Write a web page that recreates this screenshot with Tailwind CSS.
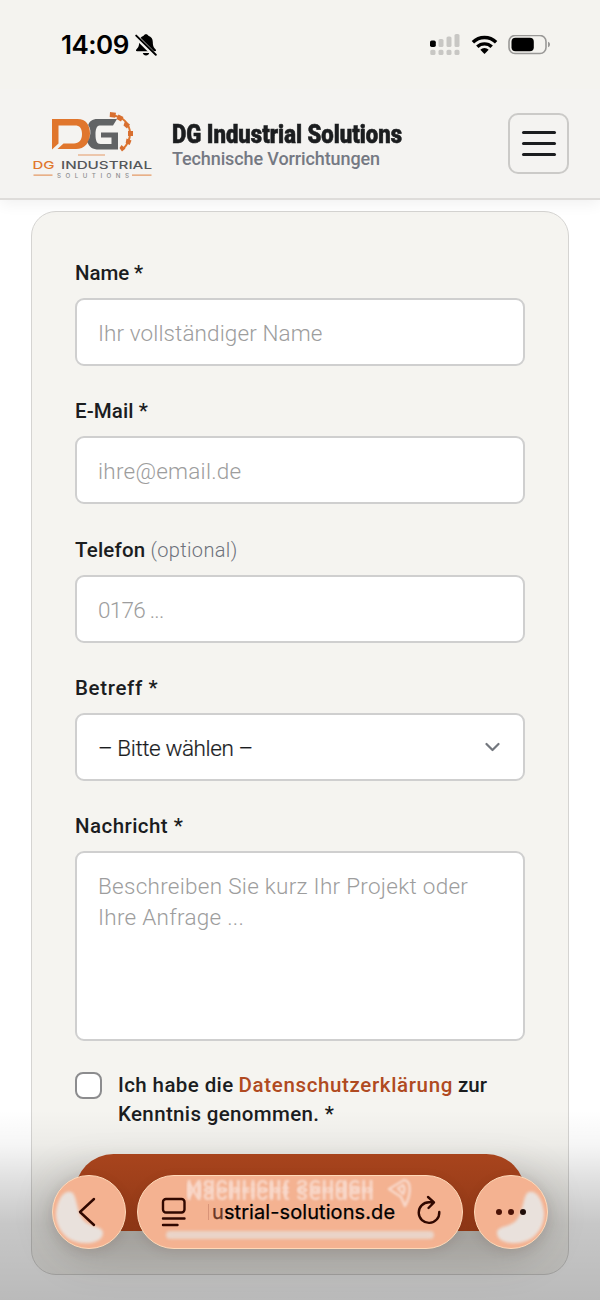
<!DOCTYPE html>
<html lang="de">
<head>
<meta charset="utf-8">
<title>DG Industrial Solutions</title>
<script src="https://cdn.jsdelivr.net/npm/@tailwindcss/browser@4"></script>
</head>
<body class="bg-white">
<div class="relative h-[1300px] w-[600px] overflow-hidden bg-white font-['Roboto',sans-serif] text-[#1b1d1f]">

  <header class="relative z-10 flex h-[200px] flex-col border-b-2 border-[#dedcda] bg-[#f4f3f1] shadow-[0_4px_14px_rgba(0,0,0,0.06)]">
    <!-- status bar -->
    <div class="flex h-[89px] items-center justify-between bg-[#f4f3ef] pt-px pr-[49px] pl-[61px] text-black">
      <div class="flex items-center gap-[6px]">
        <span class="font-['Inter',sans-serif] text-[26px] leading-[30px] font-semibold tracking-[-0.5px]">14:09</span>
        <svg class="h-[24px] w-[22px]" viewBox="0 0 22 24">
          <path d="M11 1.200c-1.200 0-2 .7-2.400 1.600C5.800 3.700 4.200 6 4.200 9c0 4.500-1.200 5.700-2.700 7.300-1 1-.5 2 .6 2h17.800c1.100 0 1.600-1 .6-2-1.500-1.600-2.700-2.800-2.700-7.300 0-3-1.600-5.300-4.400-6.200C13 1.900 12.200 1.200 11 1.200z"/>
          <path d="M7.800 20h6.400c-.3 1.500-1.500 2.500-3.200 2.500S8.100 21.500 7.800 20z"/>
          <path d="M0 2.500 20.500 23" stroke="#f4f3ef" stroke-width="4.600"/>
          <path d="M1.200 2.600 20.800 21.800" stroke="#000" stroke-width="1.900" stroke-linecap="round"/>
        </svg>
      </div>
      <div class="flex items-center">
        <svg class="h-[24px] w-[32px]" viewBox="0 0 32 24">
          <rect x="0" y="7.500" width="5.800" height="6.500" rx="1.700"/>
          <g fill="#c8c7c4">
            <rect x="8.500" y="6" width="5" height="8" rx="1.600"/>
            <rect x="16.500" y="3.500" width="5" height="10.500" rx="1.600"/>
            <rect x="24.500" y="1" width="5" height="13" rx="1.600"/>
            <rect x=".3" y="16.800" width="5.200" height="5.200" rx="1.600"/>
            <rect x="8.500" y="16.800" width="5" height="5.200" rx="1.600"/>
            <rect x="16.500" y="16.800" width="5" height="5.200" rx="1.600"/>
            <rect x="24.500" y="16.800" width="5" height="5.200" rx="1.600"/>
          </g>
        </svg>
        <svg class="ml-[9px] h-[20px] w-[27px]" viewBox="0 0 27 20">
          <g fill="none" stroke="#000" stroke-width="3.400">
            <path d="M1.900 7.200a16.600 16.600 0 0 1 23.200 0"/>
            <path d="M6.300 11.800a10.300 10.300 0 0 1 14.400 0"/>
          </g>
          <path d="M9.300 14.800a6 6 0 0 1 8.400 0L13.500 19z"/>
        </svg>
        <svg class="ml-[10px] h-[20px] w-[43px]" viewBox="0 0 43 20">
          <rect x="1" y=".5" width="37" height="18" rx="6" fill="none" stroke="#999896" stroke-width="1.600"/>
          <rect x="3.500" y="2.700" width="22.300" height="13.600" rx="4"/>
          <path d="M40 6.800c1.300.4 2 1.500 2 2.700s-.7 2.300-2 2.700z" fill="#999896"/>
        </svg>
      </div>
    </div>
    <!-- brand bar -->
    <div class="flex h-[110px] items-center pt-px pr-[31px] pl-[31px]">
      <svg class="h-[72px] w-[122px]" viewBox="31 108 122 72">
        <path d="M52 119h25.500c8.500 0 12.500 6 12.500 14.500 0 9.500-5.500 15.500-14 15.500H57.500l6-5.500H74c5 0 8-3.500 8-9.500s-2.500-8.500-7-8.500H58.500v18L52 149.500z" fill="#e0762d"/>
        <path d="M117 119H97.500C92 119 89.500 121.500 88.200 125c2.200 3 3 7 1.500 12-.6 2-1.200 3.500-2.200 5 1.500 5 5 7.500 11.500 7.500h19V132.500H101v5h10.500v6.500H100.500c-3.500 0-5-3-5-9.500 0-5 1.200-9 4-9h13.500z" fill="#616365"/>
        <path d="M112 115.500c11 .5 18 8.500 18 18 0 7-3 11.500-7 15.500" fill="none" stroke="#e0762d" stroke-width="2"/>
        <g fill="#d86f30">
          <path d="M110 112l6 .8-.8 5-5.500-.8zM118.500 114.500l5 2.500-2.500 4.500-4.500-2.500zM125 121l5 3.500-3 4-3.500-3zM128 131h5v5H128zM126.500 138.500l5 2-1.800 4.500-4-2zM121.500 145l4 3.500-3.500 3-2.500-3.500z"/>
        </g>
        <path d="M78 155h27M33.500 175.200h19M132 175.200h19.500" stroke="#e39a66" stroke-width="1.200"/>
        <g font-family="Inter, sans-serif" font-size="11">
          <text x="32.500" y="168.700" textLength="22" lengthAdjust="spacingAndGlyphs" font-weight="500" fill="#e0762d">DG</text>
          <text x="61" y="168.700" textLength="91" lengthAdjust="spacingAndGlyphs" font-weight="500" fill="#55575a">INDUSTRIAL</text>
          <text x="57" y="177.500" textLength="72" font-size="6.200" font-weight="500" fill="#8b8c8e">SOLUTIONS</text>
        </g>
      </svg>
      <div class="ml-[19px] w-[240px] pt-[4px]">
        <div class="origin-left scale-x-[0.849] text-[26px] leading-[26px] font-black whitespace-nowrap [-webkit-text-stroke:0.600px_#1b1d1f]">DG Industrial Solutions</div>
        <div class="text-[18px] leading-[23px] font-medium tracking-[-0.11px] whitespace-nowrap text-[#757983]">Technische Vorrichtungen</div>
      </div>
      <div class="ml-auto flex h-[61px] w-[61px] flex-col items-center justify-center gap-[8px] rounded-[10px] border-2 border-[#cbcac8]">
        <span class="h-[3px] w-[34px] rounded-full bg-[#1b1d1f]"></span>
        <span class="h-[3px] w-[34px] rounded-full bg-[#1b1d1f]"></span>
        <span class="h-[3px] w-[34px] rounded-full bg-[#1b1d1f]"></span>
      </div>
    </div>
  </header>

  <main class="px-[31px] pt-[11px]">
    <form class="flex h-[1064px] flex-col rounded-[25px] border-[1.500px] border-[#d5d4d2] bg-[#f5f4f0] px-[43px] pt-[46px]">
      <label class="flex h-[138.300px] flex-col text-[20.500px] leading-[30px] font-medium">
        <span class="tracking-[-0.1px]">Name *</span>
        <span class="mt-[10px] flex h-[68px] items-center rounded-[9px] border-2 border-[#cfcfcf] bg-white pt-[2px] pl-[21px] text-[22.500px] font-light tracking-[0.1px] text-[#9d9d9d]">Ihr vollständiger Name</span>
      </label>
      <label class="flex h-[138.300px] flex-col text-[20.500px] leading-[30px] font-medium">
        <span class="tracking-[0.11px]">E-Mail *</span>
        <span class="mt-[10px] flex h-[68px] items-center rounded-[9px] border-2 border-[#cfcfcf] bg-white pt-[2px] pl-[21px] text-[22.500px] font-light tracking-[0.25px] text-[#9d9d9d]">ihre@email.de</span>
      </label>
      <label class="flex h-[138.300px] flex-col text-[20.500px] leading-[30px] font-medium">
        <span class="flex gap-[5px]"><span class="tracking-[0.2px]">Telefon</span><span class="text-[20px] font-light tracking-[0.36px] text-[#6d717b]">(optional)</span></span>
        <span class="mt-[10px] flex h-[68px] items-center rounded-[9px] border-2 border-[#cfcfcf] bg-white pt-[2px] pl-[21px] text-[22.500px] font-light tracking-[-0.74px] text-[#9d9d9d]">0176 ...</span>
      </label>
      <label class="flex h-[138.300px] flex-col text-[20.500px] leading-[30px] font-medium">
        <span class="tracking-[0.65px]">Betreff *</span>
        <span class="mt-[10px] flex h-[68px] items-center justify-between rounded-[9px] border-2 border-[#cfcfcf] bg-white pt-[2px] pr-[23px] pl-[21px] text-[22.500px] font-light tracking-[-0.4px] [-webkit-text-stroke:0.200px_#1b1d1f]">– Bitte wählen –
          <svg class="mb-[1px] h-[10px] w-[16px]" viewBox="0 0 16 10" fill="none" stroke="#73777e" stroke-width="2.200" stroke-linecap="round" stroke-linejoin="round"><path d="M2.500 2 8.500 8 14.500 2"/></svg>
        </span>
      </label>
      <label class="flex flex-col text-[20.500px] leading-[30px] font-medium">
        <span class="tracking-[0.45px]">Nachricht *</span>
        <span class="mt-[10px] flex h-[190px] flex-col rounded-[9px] border-2 border-[#cfcfcf] bg-white pt-[18px] pl-[21px] text-[22.500px] leading-[31px] font-light text-[#9d9d9d]"><span class="tracking-[0.28px]">Beschreiben Sie kurz Ihr Projekt oder</span><span class="tracking-[0.28px]">Ihre Anfrage ...</span></span>
      </label>
      <label class="mt-[30px] flex text-[20.500px] leading-[29px] font-medium">
        <span class="mt-[1px] mr-[16px] h-[27px] w-[27px] rounded-[8px] border-2 border-[#8c8c8e] bg-white"></span>
        <span class="flex flex-col">
          <span class="flex gap-[5px]"><span class="tracking-[0.4px]">Ich habe die</span><span class="tracking-[0.64px] text-[#b04a21]">Datenschutzerklärung</span><span>zur</span></span>
          <span class="tracking-[0.35px]">Kenntnis genommen. *</span>
        </span>
      </label>
      <button type="button" class="relative z-20 mt-[25px] h-[77px] shrink-0 rounded-full bg-linear-to-b from-[#a8441d] to-[#8f3816]"></button>
    </form>
  </main>

  <!-- dimming behind the floating browser bar -->
  <div class="absolute inset-x-0 bottom-0 z-10 h-[190px] bg-[linear-gradient(to_bottom,rgba(0,0,0,0)_0%,rgba(0,0,0,0.035)_18%,rgba(0,0,0,0.130)_38%,rgba(0,0,0,0.220)_60%,rgba(0,0,0,0.270)_100%)]"></div>
  <div class="absolute bottom-[40px] left-[52px] z-10 h-[90px] w-[496px] rounded-full bg-[#2a2016]/18 blur-[18px]"></div>

  <!-- floating browser bar -->
  <nav class="absolute inset-x-0 bottom-[51px] z-30 flex justify-between px-[52px] text-[#300800]">
    <div class="relative flex size-[74px] items-center justify-center overflow-hidden rounded-full border-[1.500px] border-[#ffd9b8] bg-[#f4b291] shadow-[0_3px_12px_rgba(60,20,0,0.100)]">
      <svg class="absolute inset-0 size-full blur-[1.500px]" viewBox="0 0 72 72"><path d="M3 36C5 22 11 14 18 16c6 2 5 17 11 26 6 10 21 7 21 15 0 7-9 11-20 10C13 66 2 52 3 36z" fill="#e9e1dc"/></svg>
      <svg class="relative mr-[4px] h-[30px] w-[18px]" viewBox="0 0 18 30" fill="none" stroke="currentColor" stroke-width="2.400" stroke-linecap="round" stroke-linejoin="round"><path d="M16 2 2 15 16 28"/></svg>
    </div>
    <div class="relative flex h-[74px] w-[326px] items-center overflow-hidden rounded-full border-[1.500px] border-[#ffd9b8] bg-[#f4b291] shadow-[0_3px_12px_rgba(60,20,0,0.100)]">
      <div class="absolute top-[55px] left-[28px] h-[8px] w-[268px] rounded-full bg-[#ead4c8] blur-[1.500px]"></div>
      <div class="absolute top-[-2px] left-[48px] -scale-y-100 text-[23px] leading-[26px] font-medium tracking-[0.47px] whitespace-nowrap text-[#f8d8ca] blur-[1px]">Nachricht senden</div>
      <div class="absolute top-[4px] left-[48px] text-[23px] leading-[26px] font-medium tracking-[0.47px] whitespace-nowrap text-[#f8d8ca] blur-[1px]">Nachricht senden</div>
      <svg class="absolute top-[1px] left-[249px] h-[32px] w-[26px] blur-[1px]" viewBox="0 0 26 32" fill="none" stroke="#f8d8ca" stroke-width="2.600" stroke-linejoin="round"><path d="M2 12 17 3C25 4 24 18 18 29L14 20zM11 11.500l5-3.500q3 4 0 9z"/></svg>
      <svg class="relative ml-[23px] h-[30px] w-[26px]" viewBox="0 0 26 30" fill="none" stroke="currentColor" stroke-width="2.400" stroke-linecap="round"><rect x="2" y="2" width="21.500" height="13.500" rx="3"/><path d="M2 21.500h21.500M2 28h14.500"/></svg>
      <span class="relative ml-[21px] flex items-center font-['Inter',sans-serif] text-[20px] leading-[28px] tracking-[0.08px] text-black [-webkit-text-stroke:0.250px]"><span class="mr-[3px] h-[16px] w-px bg-[#d99478]"></span><span class="text-[#6a3826]">u</span>strial-solutions.de</span>
      <svg class="absolute top-[19px] left-[278px] h-[32px] w-[26px]" viewBox="0 0 26 32" fill="none" stroke="currentColor" stroke-width="2.400" stroke-linecap="round" stroke-linejoin="round"><path d="M17.500 7.300H13A10.300 10.300 0 1 0 23.300 17M12 2l6 5.300L12.500 13"/></svg>
    </div>
    <div class="relative flex size-[74px] items-center justify-center gap-[6px] overflow-hidden rounded-full border-[1.500px] border-[#ffd9b8] bg-[#f4b291] shadow-[0_3px_12px_rgba(60,20,0,0.100)]">
      <svg class="absolute inset-0 size-full -scale-x-100 blur-[1.500px]" viewBox="0 0 72 72"><path d="M3 36C5 22 11 14 18 16c6 2 5 17 11 26 6 10 21 7 21 15 0 7-9 11-20 10C13 66 2 52 3 36z" fill="#e9e1dc"/></svg>
      <span class="relative size-[6px] rounded-full bg-[#4a1206]"></span>
      <span class="relative size-[6px] rounded-full bg-[#4a1206]"></span>
      <span class="relative size-[6px] rounded-full bg-[#1f0d09]"></span>
    </div>
  </nav>
</div>
</body>
</html>
